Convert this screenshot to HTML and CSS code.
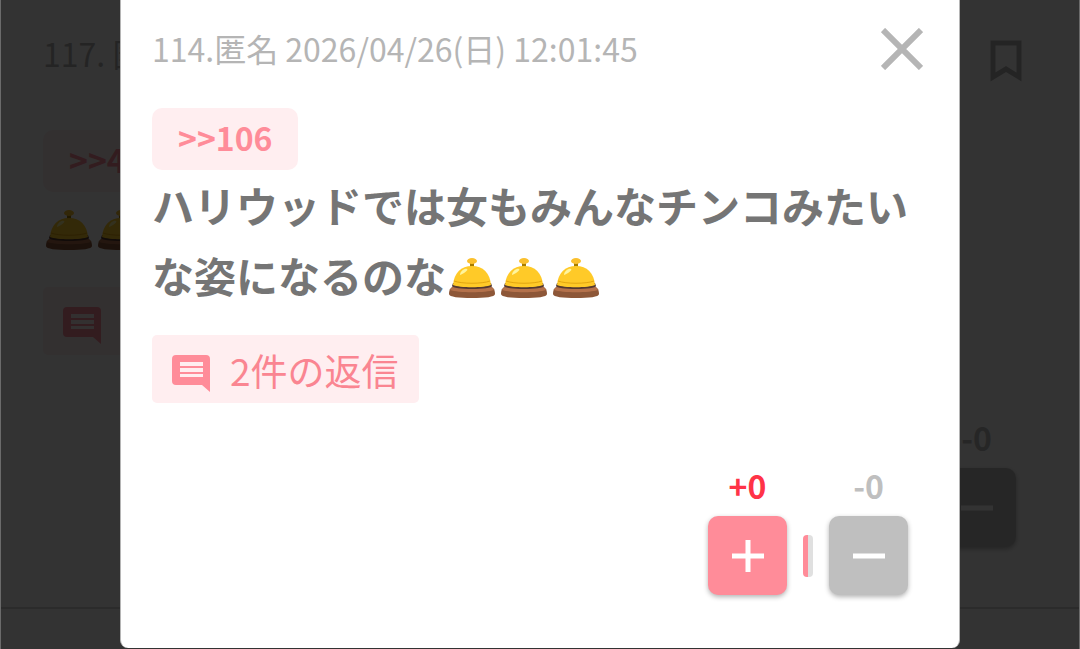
FILE: index.html
```
<!DOCTYPE html>
<html lang="ja">
<head>
    <meta charset="UTF-8">
    <meta name="viewport" content="width=device-width, initial-scale=1.0">
    <title>コメント</title>
    <link rel="stylesheet" href="styles.css">
</head>
<body>
    <!-- shared icons -->
    <svg class="sprite" aria-hidden="true">
        <symbol id="bell" viewBox="0 0 48 42">
            <path d="M22 4h4v9h-4z" fill="#a67c00"/>
            <ellipse cx="24" cy="4" rx="5" ry="3" fill="#fbc02d"/>
            <path d="M1 37c0-5 2-8 8-8h30c6 0 8 3 8 8 0 3-10 4-23 4S1 40 1 37z" fill="#8d5738"/>
            <path d="M2 33c2-4 5-4 9-4h26c4 0 7 0 9 4-8 3-36 3-44 0z" fill="#b4714b"/>
            <path d="M4 29c0 4 40 4 40 0l-1-3H5z" fill="#543930"/>
            <path d="M5 28C6 16 13 9 24 9s18 7 19 19c-6 3-32 3-38 0z" fill="#ffca28"/>
            <path d="M6 24c8 3 28 3 36 0" fill="none" stroke="#e2a610" stroke-width="1"/>
            <path d="M12 18c0-4 5-7 7-6s-4 5-7 6z" fill="#fff59d"/>
        </symbol>
        <symbol id="comment" viewBox="0 0 38 37">
            <path d="M4 0h30a4 4 0 0 1 4 4v33l-8-7H4a4 4 0 0 1-4-4V4a4 4 0 0 1 4-4zM8 7v4h23V7zm0 6v4h23v-4zm0 6v3h23v-3z" fill="currentColor" fill-rule="evenodd"/>
        </symbol>
    </svg>

    <main class="post">
        <div class="post-header">
            <span class="meta">117. 匿名</span>
            <button class="icon-btn" aria-label="ブックマーク">
                <svg width="32" height="42" viewBox="0 0 32 42"><path d="M3 3h26v34l-13-8-13 8z" fill="none" stroke="currentColor" stroke-width="5"/></svg>
            </button>
        </div>
        <a class="anchor" href="#c4">&gt;&gt;4</a>
        <p class="body">
            <span class="bells" role="img" aria-label="ベル"><svg class="bell"><use href="#bell"/></svg><svg class="bell"><use href="#bell"/></svg></span>
        </p>
        <a class="replies" href="#replies-117"><svg class="comment"><use href="#comment"/></svg>1件の返信</a>
        <div class="votes">
            <div class="vote">
                <span class="count minus-count" id="post-minus">-0</span>
                <button class="vote-btn minus" aria-labelledby="post-minus"><svg width="32" height="32" viewBox="0 0 32 32"><path d="M0 16h32" stroke="currentColor" stroke-width="5"/></svg></button>
            </div>
        </div>
    </main>

    <div class="backdrop"></div>

    <div class="modal" role="dialog" aria-label="114のコメント">
        <div class="modal-header">
            <span class="meta">114.匿名 2026/04/26(日) 12:01:45</span>
            <button class="icon-btn" aria-label="閉じる">
                <svg width="42" height="42" viewBox="0 0 42 42"><path d="M2 2l38 38M40 2L2 40" fill="none" stroke="currentColor" stroke-width="6"/></svg>
            </button>
        </div>
        <a class="anchor" href="#c106">&gt;&gt;106</a>
        <p class="body">ハリウッドでは女もみんなチンコみたいな姿になるのな<span class="bells" role="img" aria-label="ベル"><svg class="bell"><use href="#bell"/></svg><svg class="bell"><use href="#bell"/></svg><svg class="bell"><use href="#bell"/></svg></span></p>
        <a class="replies" href="#replies-114"><svg class="comment"><use href="#comment"/></svg>2件の返信</a>
        <div class="votes">
            <div class="vote">
                <span class="count plus-count" id="modal-plus">+0</span>
                <button class="vote-btn plus" aria-labelledby="modal-plus"><svg width="32" height="32" viewBox="0 0 32 32"><path d="M0 16h32M16 0v32" stroke="currentColor" stroke-width="5"/></svg></button>
            </div>
            <div class="ratio"></div>
            <div class="vote">
                <span class="count minus-count" id="modal-minus">-0</span>
                <button class="vote-btn minus" aria-labelledby="modal-minus"><svg width="32" height="32" viewBox="0 0 32 32"><path d="M0 16h32" stroke="currentColor" stroke-width="5"/></svg></button>
            </div>
        </div>
    </div>
</body>
</html>
```

FILE: styles.css
```
* {
    box-sizing: border-box;
}

body {
    margin: 0;
    font-family: "Noto Sans CJK JP", sans-serif;
    background-color: #fff;
    color: #757575;
    overflow: hidden;
}

button {
    padding: 0;
    border: none;
    font: inherit;
    cursor: pointer;
}

a {
    text-decoration: none;
}

svg {
    display: block;
}

.sprite {
    display: none;
}

/* Comment behind the dialog */
.post {
    padding: 12px 58px 60px 43px;
    border-bottom: 2px solid #d8d8d8;
}

.post-header,
.modal-header {
    display: flex;
    justify-content: space-between;
    align-items: center;
    height: 98px;
}

.post-header {
    margin-bottom: 20px;
}

.meta {
    padding-bottom: 2px;
    font-size: 32px;
    color: #b5b5b5;
}

.post-header .meta {
    padding-bottom: 16px;
}

.icon-btn {
    background: none;
    color: #b5b5b5;
}

.anchor {
    display: block;
    width: fit-content;
    padding: 0 26px 4px;
    border-radius: 10px;
    background-color: #ffeef0;
    color: #ff8c99;
    font-size: 32px;
    font-weight: bold;
    line-height: 58px;
}

.body {
    margin: 0;
    font-size: 42px;
    font-weight: bold;
    line-height: 70px;
}

.bells {
    display: inline-flex;
    gap: 4px;
    padding: 0 0 8px 2px;
    vertical-align: middle;
}

.bell {
    width: 48px;
    height: 42px;
}

.replies {
    display: flex;
    align-items: center;
    gap: 20px;
    width: fit-content;
    height: 68px;
    margin-top: 25px;
    padding: 2px 20px 0;
    border-radius: 5px;
    background-color: #ffeef0;
    color: #fa8591;
    font-size: 37px;
}

.comment {
    width: 38px;
    height: 37px;
    margin-top: 6px;
    color: #ff8c99;
}

.votes {
    display: flex;
    justify-content: flex-end;
    gap: 16px;
    margin-top: 60px;
    padding-right: 6px;
}

.vote {
    display: flex;
    flex-direction: column;
    align-items: center;
    gap: 8px;
}

.count {
    font-size: 32px;
    font-weight: bold;
    line-height: 45px;
}

.plus-count {
    color: #ff3347;
}

.minus-count {
    color: #bfbfbf;
}

.vote-btn {
    display: flex;
    justify-content: center;
    align-items: center;
    width: 79px;
    height: 79px;
    border-radius: 10px;
    color: #fff;
    box-shadow: 0 2px 5px rgba(0, 0, 0, 0.3);
}

.plus {
    background-color: #ff8c99;
}

.minus {
    background-color: #bfbfbf;
}

.ratio {
    align-self: flex-end;
    width: 10px;
    height: 42px;
    margin-bottom: 18px;
    border-radius: 4px;
    background: linear-gradient(to right, #ff8c99 50%, #e0e0e0 50%);
}

.backdrop {
    position: fixed;
    inset: 0;
    border: solid #6b6b6b;
    border-width: 0 1px;
    background-color: rgba(0, 0, 0, 0.8);
}

/* Dialog */
.modal {
    position: absolute;
    top: 0;
    left: 120px;
    right: 120px;
    padding: 0 31px 53px;
    border: solid #b5b5b5;
    border-width: 0 1px;
    border-radius: 0 0 8px 8px;
    background-color: #fff;
}

.modal-header {
    margin-bottom: 10px;
    padding-right: 5px;
}

.modal .votes {
    padding-right: 20px;
}
```
